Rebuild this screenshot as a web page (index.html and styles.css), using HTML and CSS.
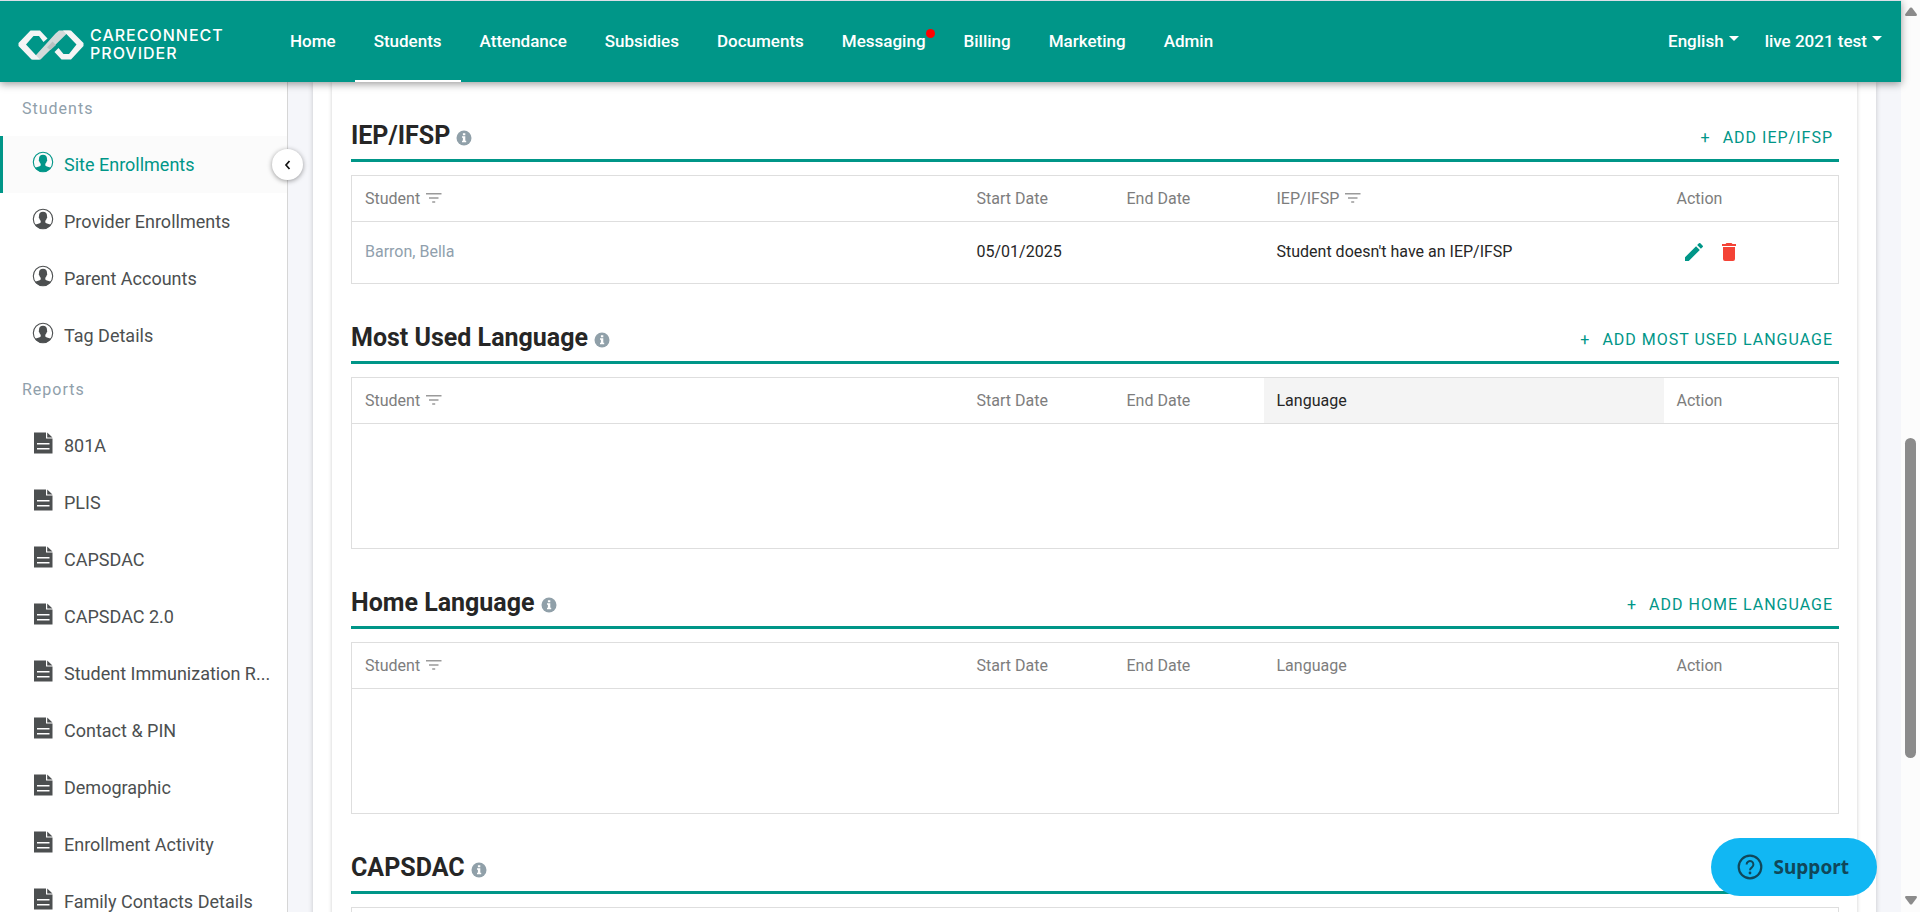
FILE: index.html
```html
<!DOCTYPE html>
<html lang="en">
<head>
<meta charset="utf-8">
<title>CareConnect Provider</title>
<link rel="stylesheet" href="styles.css">
</head>
<body>
<svg width="0" height="0" class="sprite" aria-hidden="true">
  <symbol id="person" viewBox="0 0 22 22"><circle cx="11" cy="11" r="9.7" fill="none" stroke="currentColor" stroke-width="1.1"/><path fill="currentColor" d="M11 3.800c2.500 0 4 1.500 4 4 0 .8.100 1 .2 1.500s-.3 1.100-.6 1.300c-.2 1.100-.8 1.700-1.300 2.300v1.500c1 1.100 3.700 1.300 5.700 2.300A9.700 9.700 0 0 1 11 20.700a9.700 9.700 0 0 1-8-4c2-1 4.700-1.200 5.700-2.300v-1.500c-.5-.6-1.100-1.200-1.300-2.300-.3-.2-.7-.8-.6-1.300s.2-.7.200-1.500c0-2.500 1.500-4 4-4z"/></symbol>
  <symbol id="doc" viewBox="0 0 22 22"><path fill="currentColor" fill-rule="evenodd" d="M2 .5h12v6h6.500v15H2zM5 11v1.500h12.500V11zm0 5v1.500h12.500V16zM15.200.5 20.500 5.400h-5.300z"/></symbol>
  <symbol id="info" viewBox="0 0 16 16"><circle cx="8" cy="8" r="7.500" fill="currentColor"/><path fill="#fff" d="M6.900 3.300h2.400v2H6.900zM6 6.300h3.300v4.500h.9v1.400H6v-1.400h.9V7.700H6z"/></symbol>
  <symbol id="filter" viewBox="0 0 16 12"><path fill="currentColor" d="M0 1h15.500v1.500H0zM3 5.200h9.500v1.500H3zM6.200 9.300h3v1.500h-3z"/></symbol>
  <symbol id="pencil" viewBox="0 0 24 24"><path fill="currentColor" d="M3 17.250V21h3.750L17.810 9.940l-3.750-3.750L3 17.250zM20.710 7.040a1 1 0 0 0 0-1.410l-2.340-2.340a1 1 0 0 0-1.410 0l-1.830 1.830 3.750 3.750 1.830-1.830z"/></symbol>
  <symbol id="trash" viewBox="0 0 24 24"><path fill="currentColor" d="M6 19a2 2 0 0 0 2 2h8a2 2 0 0 0 2-2V7H6v12zM19 4h-3.500l-1-1h-5l-1 1H5v2h14V4z"/></symbol>
</svg>
<div class="shell">
  <div class="app">
    <header class="topbar">
      <a class="brand" href="#" aria-label="CareConnect Provider">
        <svg class="brand-mark" viewBox="0 0 66 30" aria-hidden="true">
          <path fill="#d3dada" d="M14 29.500 37.500 3.500 41 .5h11L26 26l-3.500 3.500z"/>
          <path fill="#b9c2c2" d="M29 17.500 34.500 11.500 38 15l-5.500 5z"/>
          <path fill="#f5f5f5" d="M29.500 8.500 22 .5H12.500L.5 13v3L13.500 29.500H22l-1-1L8 14.500 15.500 6h5.500l4.500 6z"/>
          <path fill="#f5f5f5" d="M45 .5h8L65.500 13v3L53 29.500h-9.500L36.500 22l4-4 5 6H51l7.500-9.500z"/>
        </svg>
        <span class="brand-name"><span>CARECONNECT</span><span>PROVIDER</span></span>
      </a>
      <nav class="nav" aria-label="Main">
        <a href="#">Home</a>
        <a href="#" class="is-active" aria-current="page">Students</a>
        <a href="#">Attendance</a>
        <a href="#">Subsidies</a>
        <a href="#">Documents</a>
        <a href="#">Messaging<i class="dot"></i></a>
        <a href="#">Billing</a>
        <a href="#">Marketing</a>
        <a href="#">Admin</a>
      </nav>
      <div class="account">
        <button type="button">English<i class="caret"></i></button>
        <button type="button">live 2021 test<i class="caret"></i></button>
      </div>
    </header>
    <div class="body">
      <aside class="sidebar">
        <h2 class="group">Students</h2>
        <nav class="links" aria-label="Students">
          <a href="#" class="is-active"><svg><use href="#person"/></svg><span>Site Enrollments</span></a>
          <a href="#"><svg><use href="#person"/></svg><span>Provider Enrollments</span></a>
          <a href="#"><svg><use href="#person"/></svg><span>Parent Accounts</span></a>
          <a href="#"><svg><use href="#person"/></svg><span>Tag Details</span></a>
        </nav>
        <h2 class="group">Reports</h2>
        <nav class="links" aria-label="Reports">
          <a href="#"><svg><use href="#doc"/></svg><span>801A</span></a>
          <a href="#"><svg><use href="#doc"/></svg><span>PLIS</span></a>
          <a href="#"><svg><use href="#doc"/></svg><span>CAPSDAC</span></a>
          <a href="#"><svg><use href="#doc"/></svg><span>CAPSDAC 2.0</span></a>
          <a href="#"><svg><use href="#doc"/></svg><span>Student Immunization R...</span></a>
          <a href="#"><svg><use href="#doc"/></svg><span>Contact &amp; PIN</span></a>
          <a href="#"><svg><use href="#doc"/></svg><span>Demographic</span></a>
          <a href="#"><svg><use href="#doc"/></svg><span>Enrollment Activity</span></a>
          <a href="#"><svg><use href="#doc"/></svg><span>Family Contacts Details</span></a>
        </nav>
        <button type="button" class="collapse" aria-label="Collapse sidebar"><svg viewBox="0 0 8 10"><path d="M5.500 1 2 5l3.500 4" fill="none" stroke="#111" stroke-width="1.700"/></svg></button>
      </aside>
      <main class="content">
        <div class="card"><div class="panel">
          <section class="block">
            <div class="block-head"><h3>IEP/IFSP</h3><svg class="info"><use href="#info"/></svg><button type="button" class="add"><span>+</span>ADD IEP/IFSP</button></div>
            <table class="grid">
              <colgroup><col><col class="c-date"><col class="c-date"><col class="c-lang"><col class="c-act"></colgroup>
              <thead><tr><th>Student<svg class="filter"><use href="#filter"/></svg></th><th>Start Date</th><th>End Date</th><th>IEP/IFSP<svg class="filter"><use href="#filter"/></svg></th><th>Action</th></tr></thead>
              <tbody><tr class="record"><td class="muted">Barron, Bella</td><td>05/01/2025</td><td></td><td>Student doesn't have an IEP/IFSP</td><td><div class="actions"><button type="button" class="edit" aria-label="Edit"><svg><use href="#pencil"/></svg></button><button type="button" class="delete" aria-label="Delete"><svg><use href="#trash"/></svg></button></div></td></tr></tbody>
            </table>
          </section>
          <section class="block">
            <div class="block-head"><h3>Most Used Language</h3><svg class="info"><use href="#info"/></svg><button type="button" class="add"><span>+</span>ADD MOST USED LANGUAGE</button></div>
            <table class="grid">
              <colgroup><col><col class="c-date"><col class="c-date"><col class="c-lang"><col class="c-act"></colgroup>
              <thead><tr><th>Student<svg class="filter"><use href="#filter"/></svg></th><th>Start Date</th><th>End Date</th><th class="is-hover">Language</th><th>Action</th></tr></thead>
              <tbody><tr class="empty"><td colspan="5"></td></tr></tbody>
            </table>
          </section>
          <section class="block">
            <div class="block-head"><h3>Home Language</h3><svg class="info"><use href="#info"/></svg><button type="button" class="add"><span>+</span>ADD HOME LANGUAGE</button></div>
            <table class="grid">
              <colgroup><col><col class="c-date"><col class="c-date"><col class="c-lang"><col class="c-act"></colgroup>
              <thead><tr><th>Student<svg class="filter"><use href="#filter"/></svg></th><th>Start Date</th><th>End Date</th><th>Language</th><th>Action</th></tr></thead>
              <tbody><tr class="empty"><td colspan="5"></td></tr></tbody>
            </table>
          </section>
          <section class="block">
            <div class="block-head"><h3>CAPSDAC</h3><svg class="info"><use href="#info"/></svg></div>
            <table class="grid"><tbody><tr class="empty"><td></td></tr></tbody></table>
          </section>
        </div></div>
      </main>
    </div>
  </div>
  <div class="scrollbar" aria-hidden="true">
    <svg viewBox="0 0 12 10"><path d="M5 .8Q6 0 7 .8l4.700 6.200q.8 2-1 2H1.300q-1.800 0-1-2z"/></svg>
    <div class="track"><div class="thumb"></div></div>
    <svg viewBox="0 0 12 10"><path d="M5 9.200q1 .8 2 0l4.700-6.200q.8-2-1-2H1.300q-1.800 0-1 2z"/></svg>
  </div>
</div>
<button type="button" class="support"><svg viewBox="0 0 26 26"><circle cx="13" cy="13" r="11.300" fill="none" stroke="currentColor" stroke-width="2.200"/><path d="M9.600 10.500a3.400 3.400 0 1 1 5.300 2.800c-1.300.9-1.900 1.500-1.900 3" fill="none" stroke="currentColor" stroke-width="2"/><circle cx="13" cy="19" r="1.400" fill="currentColor"/></svg>Support</button>
</body>
</html>
```
FILE: styles.css
```css
* { box-sizing: border-box; }
body { margin: 0; font-family: Roboto, sans-serif; font-size: 16px; color: #262626; background: #fff; }
button { font: inherit; color: inherit; background: none; border: 0; padding: 0; cursor: pointer; }
a { color: inherit; text-decoration: none; }
.sprite { position: absolute; }
.shell { display: flex; height: 100vh; overflow: hidden; }
.app { flex: 1; min-width: 0; display: flex; flex-direction: column; }

.topbar { flex: none; height: 82px; border-top: 1px solid #dcdfe8; background: #009688; color: #fff; display: flex; box-shadow: 0 2px 8px rgba(0,0,0,.4); z-index: 2; position: relative; }
.brand { display: flex; align-items: center; width: 271px; padding: 6px 0 0 18px; gap: 6px; }
.brand-mark { width: 66px; height: 30px; }
.brand-name { display: flex; flex-direction: column; font: 500 16px/18px Inter, sans-serif; letter-spacing: 1px; padding-bottom: 2px; }
.nav { display: flex; font-size: 17px; font-weight: 500; }
.nav a { position: relative; display: flex; align-items: center; padding: 0 19px; border-bottom: 2px solid transparent; }
.nav .is-active { border-color: #fff; }
.dot { position: absolute; top: 28px; right: 10px; width: 9px; height: 9px; border-radius: 50%; background: #f00; }
.account { margin-left: auto; display: flex; gap: 26px; padding: 0 19px 2px 0; font-size: 17px; font-weight: 500; }
.account button { display: flex; align-items: center; gap: 5px; }
.caret { border: 5px solid transparent; border-top-color: #fff; border-bottom: 0; margin-bottom: 4px; }

.body { flex: 1; min-height: 0; display: flex; }
.sidebar { position: relative; flex: none; width: 288px; padding-top: 1px; border-right: 1px solid #d6d6d6; }
.group { margin: 0; padding-left: 22px; height: 53px; font: 400 16px/52px Roboto, sans-serif; letter-spacing: 1px; color: #90a0ab; }
.links a { display: flex; align-items: center; gap: 10px; height: 57px; padding: 0 12px 0 29px; border-left: 3px solid transparent; font-size: 18px; color: #4c4f50; white-space: nowrap; }
.links svg { flex: none; width: 22px; height: 22px; margin-bottom: 5px; }
.links .is-active { color: #009688; border-color: #009688; background: #fbfbfb; }
.collapse { position: absolute; top: 67px; right: -16px; width: 31px; height: 31px; border-radius: 50%; background: #fff; box-shadow: 0 1px 5px rgba(0,0,0,.4); display: grid; place-items: center; z-index: 1; }
.collapse svg { width: 8px; height: 10px; }

.content { flex: 1; min-width: 0; padding: 0 25px; background: #f5f6fa; overflow: hidden; }
.card { padding: 0 19px; background: #fff; box-shadow: 0 0 5px rgba(0,0,0,.2); }
.panel { padding: 22px 18px 0 19px; background: #fff; box-shadow: 0 0 4px rgba(0,0,0,.2); }
.block { margin-bottom: 22px; }
.block-head { display: flex; align-items: center; height: 58px; padding-top: 8px; border-bottom: 3px solid #009688; margin-bottom: 13px; }
.block h3 { margin: 0; font-size: 25px; line-height: 32px; font-weight: 700; }
.info { width: 16px; height: 16px; margin: 4px 0 0 6px; color: #90a0a9; }
.add { margin: 4px 6px 0 auto; display: flex; gap: 12px; color: #009688; letter-spacing: 1px; }
.grid { width: 100%; table-layout: fixed; border-collapse: collapse; border: 1px solid #dedede; }
.c-date { width: 150px; }
.c-lang { width: 400px; }
.c-act { width: 175px; }
th, td { padding: 0 13px; text-align: left; }
th { height: 46px; font-weight: 400; color: #7d7d7d; border-bottom: 1px solid #dedede; }
th.is-hover { background: #f4f4f4; color: #262626; }
.filter { width: 16px; height: 12px; margin-left: 6px; color: #9a9a9a; }
.record td { height: 62px; padding-bottom: 2px; }
.muted { color: #90a0ad; }
.empty td { height: 125px; }
.actions { display: flex; gap: 11px; padding-left: 5px; }
.actions button { display: flex; }
.actions svg { width: 24px; height: 24px; }
.edit { color: #009688; }
.delete { color: #f44336; }

.scrollbar { flex: none; width: 19px; padding: 7px 3px; background: #fcfcfc; display: flex; flex-direction: column; align-items: center; gap: 7px; }
.scrollbar svg { width: 12px; height: 10px; fill: #8b8b8b; }
.track { flex: 1; }
.thumb { width: 11px; height: 37%; margin-top: 414px; border-radius: 6px; background: #8b8b8b; }

.support { position: fixed; right: 43px; bottom: 16px; height: 58px; padding: 0 28px 0 26px; border-radius: 29px; background: #11b7f3; color: #10475a; display: flex; align-items: center; gap: 11px; font: 700 19px/24px "Noto Sans", sans-serif; }
.support svg { width: 26px; height: 26px; }
```
